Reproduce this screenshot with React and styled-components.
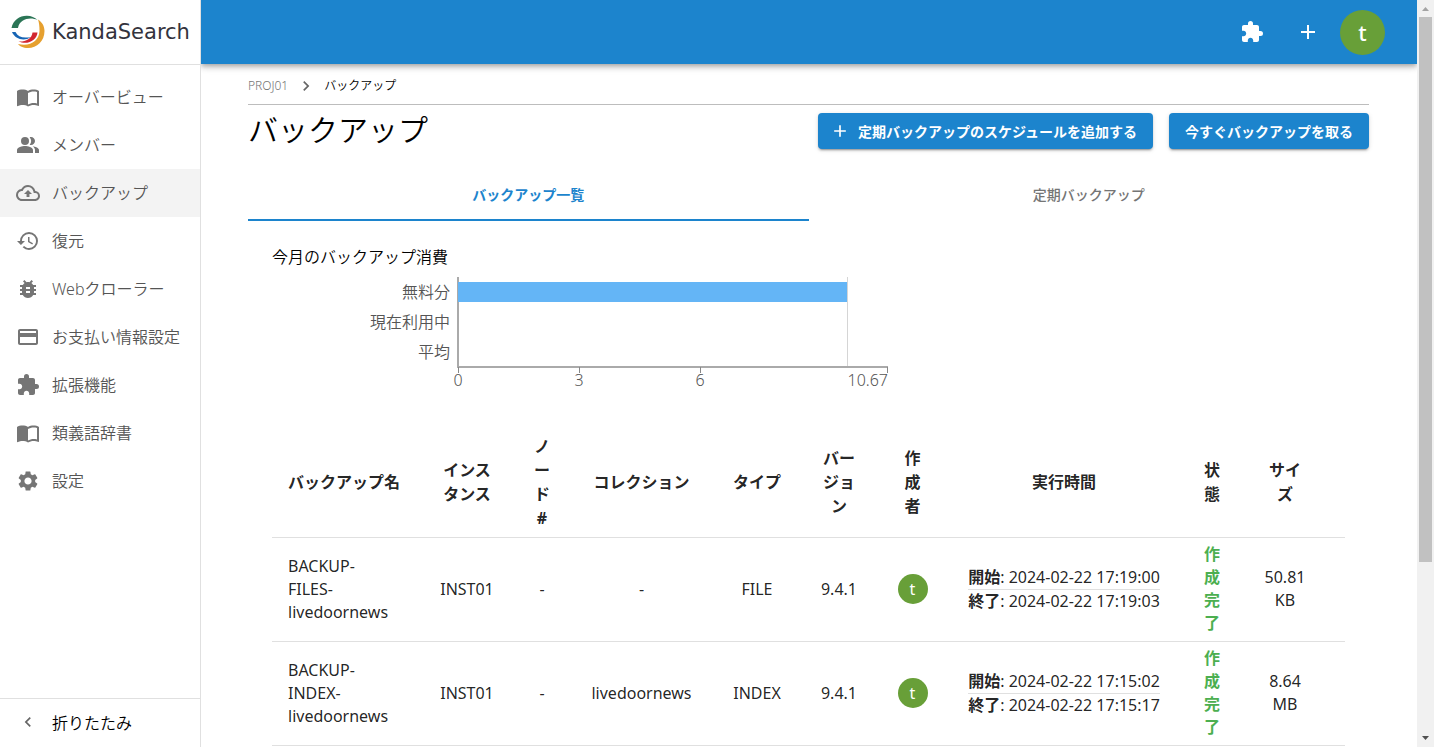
import React from "react";
import styled, { createGlobalStyle } from "styled-components";
import {
  MdImportContacts,
  MdPeopleAlt,
  MdOutlineBackup,
  MdHistory,
  MdBugReport,
  MdPayment,
  MdExtension,
  MdSettings,
  MdAdd,
  MdChevronRight,
  MdChevronLeft,
} from "react-icons/md";

const blue = "#1c84cd";
const green = "#689f38";
const line = "#e0e0e0";

const GlobalStyle = createGlobalStyle`
  *, *::before, *::after { box-sizing: border-box; }
  body {
    margin: 0;
    background: #fff;
    color: #000;
    font-family: "Noto Sans", "Noto Sans CJK JP", sans-serif;
    font-size: 16px;
    line-height: 24px;
  }
  button { font-family: inherit; border: 0; cursor: pointer; }
  h1, h2 { margin: 0; font-weight: 350; }
`;

const Shell = styled.div`
  display: flex;
  height: 100vh;
  overflow: hidden;
`;

const Sidebar = styled.aside`
  flex: 0 0 201px;
  z-index: 1;
  display: flex;
  flex-direction: column;
  border-right: 1px solid ${line};
  background: #fff;
`;

const Brand = styled.a`
  display: flex;
  align-items: center;
  gap: 6px;
  height: 65px;
  padding-left: 10px;
  border-bottom: 1px solid ${line};
  color: #33333d;
  font-family: "DejaVu Sans", sans-serif;
  font-size: 21px;
  text-decoration: none;
`;

const NavList = styled.nav`
  flex: 1;
  padding-top: 8px;
`;

const NavLink = styled.a`
  display: flex;
  align-items: center;
  gap: 12px;
  height: 48px;
  padding: 0 16px;
  background: ${(p) => (p.$active ? "#f3f3f3" : "transparent")};
  color: #555;
  font-weight: 350;
  text-decoration: none;
  white-space: nowrap;
  svg { flex: none; color: #757575; }
`;

const Collapse = styled.button`
  display: flex;
  align-items: center;
  gap: 14px;
  height: 49px;
  padding: 0 18px 2px;
  border-top: 1px solid ${line};
  background: #fff;
  color: #000;
  font-size: 16px;
  font-weight: 350;
  svg { color: #666; }
`;

const Main = styled.div`
  flex: 1;
  min-width: 0;
  display: flex;
  flex-direction: column;
`;

const TopBar = styled.header`
  flex: 0 0 64px;
  display: flex;
  align-items: center;
  justify-content: flex-end;
  padding-right: 32px;
  background: ${blue};
  box-shadow: 0 2px 4px -1px rgba(0, 0, 0, 0.2), 0 4px 5px rgba(0, 0, 0, 0.14),
    0 1px 10px rgba(0, 0, 0, 0.12);
`;

const IconButton = styled.button`
  display: flex;
  margin-right: ${(p) => p.$gap}px;
  padding: 0;
  background: none;
  color: #fff;
`;

const Avatar = styled.span`
  display: inline-flex;
  align-items: center;
  justify-content: center;
  width: ${(p) => p.$size}px;
  height: ${(p) => p.$size}px;
  border-radius: 50%;
  background: ${green};
  color: #fff;
  font-size: ${(p) => (p.$size > 40 ? 22 : 16)}px;
  font-weight: ${(p) => (p.$size > 40 ? 500 : 400)};
  vertical-align: middle;
`;

const Content = styled.main`
  flex: 1;
  min-height: 0;
  overflow: hidden;
  padding: 8px 48px 0 47px;
`;

const Breadcrumbs = styled.nav`
  display: flex;
  align-items: center;
  gap: 8px;
  height: 33px;
  padding-bottom: 4px;
  border-bottom: 1px solid #bdbdbd;
  font-size: 12px;
  font-weight: 350;
  svg { color: #666; }
`;

const CrumbLink = styled.a`
  color: #757575;
  font-weight: 300;
  text-decoration: none;
`;

const TitleRow = styled.div`
  display: flex;
  align-items: center;
  gap: 16px;
  padding-top: 8px;
`;

const Title = styled.h1`
  flex: 1;
  padding-bottom: 2px;
  font-size: 30px;
  line-height: 34px;
`;

const PrimaryButton = styled.button`
  display: flex;
  align-items: center;
  gap: 8px;
  height: 36px;
  padding: 0 16px 1px ${(p) => (p.$icon ? 12 : 16)}px;
  border-radius: 4px;
  background: ${blue};
  color: #fff;
  font-size: 14px;
  font-weight: 700;
  box-shadow: 0 3px 1px -2px rgba(0, 0, 0, 0.2), 0 2px 2px rgba(0, 0, 0, 0.14),
    0 1px 5px rgba(0, 0, 0, 0.12);
`;

const Tabs = styled.div`
  display: flex;
  margin-top: 22px;
`;

const Tab = styled.button`
  flex: 1;
  height: 50px;
  padding: 0 0 2px;
  background: none;
  border-bottom: 2px solid ${(p) => (p.$active ? blue : "transparent")};
  color: ${(p) => (p.$active ? blue : "#757575")};
  font-size: 14px;
  font-weight: ${(p) => (p.$active ? 700 : 500)};
`;

const Panel = styled.section`
  padding: 24px;
`;

const PanelTitle = styled.h2`
  font-size: 16px;
  line-height: 24px;
`;

const Chart = styled.svg`
  display: block;
  margin-bottom: 29px;
  font-size: 16px;
  font-weight: 350;
  fill: #555;
`;

const Table = styled.table`
  width: 100%;
  table-layout: fixed;
  border-collapse: separate;
  border-spacing: 0;
  color: rgba(0, 0, 0, 0.87);
`;

const HeadCell = styled.th`
  padding: 5px 0 7px ${(p) => (p.$left ? 16 : 0)}px;
  border-bottom: 1px solid ${line};
  text-align: ${(p) => (p.$left ? "left" : "center")};
  font-weight: 700;
  line-height: 24px;
  white-space: pre-line;
`;

const Cell = styled.td`
  padding: 5px ${(p) => (p.$left ? 24 : 16)}px 6px 16px;
  border-bottom: 1px solid ${line};
  text-align: ${(p) => (p.$left ? "left" : "center")};
  line-height: 23px;
`;

const Status = styled.strong`
  display: inline-block;
  width: 1em;
  vertical-align: middle;
  color: #4caf50;
  font-weight: 700;
  line-break: anywhere;
`;

const Time = styled.div`
  display: inline-block;
  vertical-align: middle;
  white-space: nowrap;
  b { font-weight: 700; }
  & > div + div { border-top: 1px solid ${line}; }
`;

const ScrollTrack = styled.div`
  flex: 0 0 17px;
  display: flex;
  flex-direction: column;
  align-items: center;
  background: #f1f1f1;
`;

const ScrollArrow = styled.svg`
  flex: 0 0 17px;
  width: 17px;
`;

const ScrollRail = styled.div`
  flex: 1;
  width: 13px;
`;

const ScrollThumb = styled.div`
  height: 76.5%;
  background: #c1c1c1;
`;

const navItems = [
  ["オーバービュー", MdImportContacts],
  ["メンバー", MdPeopleAlt],
  ["バックアップ", MdOutlineBackup],
  ["復元", MdHistory],
  ["Webクローラー", MdBugReport],
  ["お支払い情報設定", MdPayment],
  ["拡張機能", MdExtension],
  ["類義語辞書", MdImportContacts],
  ["設定", MdSettings],
];

const columns = [
  { label: "バックアップ名", width: 144, left: true },
  { label: "インス\nタンス", width: 102 },
  { label: "ノ\nー\nド\n#", width: 48 },
  { label: "コレクション", width: 151 },
  { label: "タイプ", width: 80 },
  { label: "バー\nジョ\nン", width: 84 },
  { label: "作\n成\n者", width: 63 },
  { label: "実行時間", width: 240 },
  { label: "状\n態", width: 56 },
  { label: "サイ\nズ", width: 90 },
  { label: "", width: 15 },
];

const backups = [
  { name: "BACKUP-FILES-livedoornews", collection: "-", type: "FILE", start: "17:19:00", end: "17:19:03", size: "50.81 KB" },
  { name: "BACKUP-INDEX-livedoornews", collection: "livedoornews", type: "INDEX", start: "17:15:02", end: "17:15:17", size: "8.64 MB" },
];

function Logo() {
  return (
    <svg width="36" height="36" viewBox="0 0 36 36" aria-hidden="true">
      <path d="M28 5.500C32 8 34.500 12 34.500 17C34.500 27 27 34 18 34C13 34 9.500 32 8 30C20 33 29 27 29.500 17C29.500 12 29 8.500 28 5.500Z" fill="#e6a02f" />
      <path d="M1.500 14C3 6 10 1.500 17 1.700C21 1.800 25 3.500 27.500 6C21 3 10 4 8 14Z" fill="#2b7556" />
      <path d="M2 18H5.500C8 23 13 24.500 21 23C14 28 5 25 2 18Z" fill="#1765b5" />
      <path d="M22.500 18.500H27.500C27 26 18 31.500 8.500 27.500C15 28 22 25 22.500 18.500Z" fill="#d22630" />
    </svg>
  );
}

function UsageChart() {
  return (
    <Chart width="640" height="131" viewBox="0 0 640 131" role="img" aria-label="今月のバックアップ消費">
      <g textAnchor="end">
        <text x="178" y="29">無料分</text>
        <text x="178" y="59">現在利用中</text>
        <text x="178" y="89">平均</text>
        <text x="616" y="117">10.67</text>
      </g>
      <g textAnchor="middle">
        <text x="186" y="117">0</text>
        <text x="307" y="117">3</text>
        <text x="428" y="117">6</text>
      </g>
      <path d="M575.500 8V98" stroke="#d5d5d5" />
      <path d="M186 8V98M185 98H616" stroke="#aaa" strokeWidth="2" fill="none" />
      <rect x="186" y="13" width="389" height="20" fill="#64b5f6" />
      <path d="M186.500 98V104M307.500 98V104M428.500 98V104M615.500 98V104" stroke="#888" />
    </Chart>
  );
}

export default function App() {
  return (
    <>
      <GlobalStyle />
      <Shell>
        <Sidebar>
          <Brand href="#">
            <Logo />
            <span>KandaSearch</span>
          </Brand>
          <NavList>
            {navItems.map(([label, Icon]) => (
              <NavLink key={label} href="#" $active={label === "バックアップ"}>
                <Icon size={24} />
                {label}
              </NavLink>
            ))}
          </NavList>
          <Collapse>
            <MdChevronLeft size={20} />
            折りたたみ
          </Collapse>
        </Sidebar>
        <Main>
          <TopBar>
            <IconButton aria-label="拡張機能" $gap={32}>
              <MdExtension size={24} />
            </IconButton>
            <IconButton aria-label="追加" $gap={20}>
              <MdAdd size={24} />
            </IconButton>
            <Avatar $size={45}>t</Avatar>
          </TopBar>
          <Content>
            <Breadcrumbs>
              <CrumbLink href="#">PROJ01</CrumbLink>
              <MdChevronRight size={20} />
              <span>バックアップ</span>
            </Breadcrumbs>
            <TitleRow>
              <Title>バックアップ</Title>
              <PrimaryButton $icon>
                <MdAdd size={20} />
                定期バックアップのスケジュールを追加する
              </PrimaryButton>
              <PrimaryButton>今すぐバックアップを取る</PrimaryButton>
            </TitleRow>
            <Tabs role="tablist">
              <Tab role="tab" aria-selected="true" $active>バックアップ一覧</Tab>
              <Tab role="tab" aria-selected="false">定期バックアップ</Tab>
            </Tabs>
            <Panel>
              <PanelTitle>今月のバックアップ消費</PanelTitle>
              <UsageChart />
              <Table>
                <colgroup>
                  {columns.map((c, i) => (
                    <col key={i} width={c.width} />
                  ))}
                </colgroup>
                <thead>
                  <tr>
                    {columns.map((c, i) => (
                      <HeadCell key={i} $left={c.left}>{c.label}</HeadCell>
                    ))}
                  </tr>
                </thead>
                <tbody>
                  {backups.map((b) => (
                    <tr key={b.name}>
                      <Cell $left>{b.name}</Cell>
                      <Cell>INST01</Cell>
                      <Cell>-</Cell>
                      <Cell>{b.collection}</Cell>
                      <Cell>{b.type}</Cell>
                      <Cell>9.4.1</Cell>
                      <Cell><Avatar $size={30}>t</Avatar></Cell>
                      <Cell>
                        <Time>
                          <div><b>開始</b>: 2024-02-22 {b.start}</div>
                          <div><b>終了</b>: 2024-02-22 {b.end}</div>
                        </Time>
                      </Cell>
                      <Cell><Status>作成完了</Status></Cell>
                      <Cell>{b.size}</Cell>
                      <Cell />
                    </tr>
                  ))}
                </tbody>
              </Table>
            </Panel>
          </Content>
        </Main>
        <ScrollTrack aria-hidden="true">
          <ScrollArrow viewBox="0 0 17 17"><path d="M5 11L8.500 7L12 11Z" fill="#a3a3a3" /></ScrollArrow>
          <ScrollRail><ScrollThumb /></ScrollRail>
          <ScrollArrow viewBox="0 0 17 17"><path d="M5 6L8.500 10L12 6Z" fill="#505050" /></ScrollArrow>
        </ScrollTrack>
      </Shell>
    </>
  );
}
